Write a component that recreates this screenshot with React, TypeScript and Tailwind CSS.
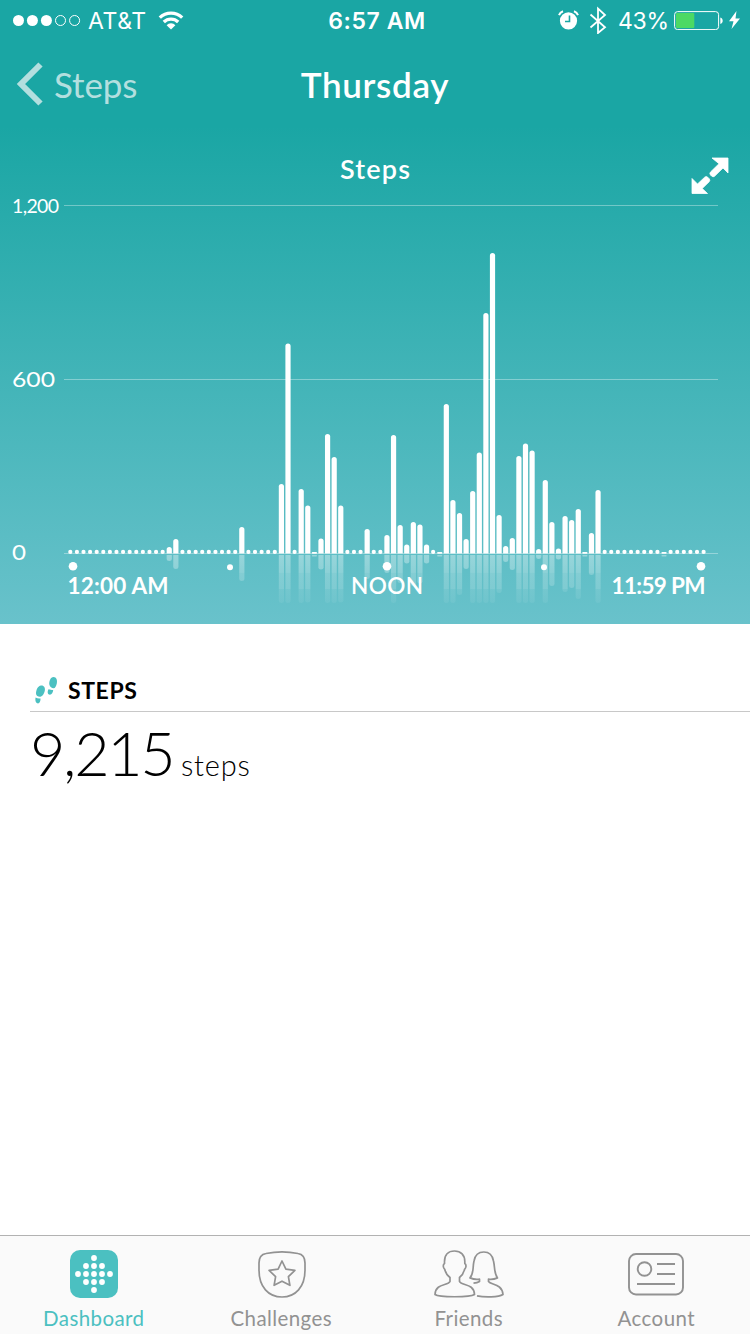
import type { ReactNode } from 'react'

// [slot, y of the bar top] - 97 slots over the day, one every 15 minutes
const BARS: [number, number][] = [
  [15, 547], [16, 539], [26, 527], [32, 484], [33, 343.5], [35, 489], [36, 505.5], [38, 538.5],
  [39, 434], [40, 457], [41, 505.5], [45, 529], [48, 535], [49, 435], [50, 525], [51, 544.5],
  [52, 522], [53, 524.5], [54, 544.5], [57, 404], [58, 500], [59, 513], [60, 539], [61, 491],
  [62, 452.5], [63, 313], [64, 253], [65, 515], [66, 546], [67, 538], [68, 456], [69, 443.5],
  [70, 450.5], [71, 549], [72, 480], [73, 522], [74, 548.5], [75, 516], [76, 520], [77, 509],
  [79, 533], [80, 490],
]
const TINY = [37, 56, 78, 90]
const SLOTS = Array.from({ length: 97 }, (_, i) => i)
const BASE = 553
const slotX = (i: number) => 70.3 + i * 6.597

const GRID = [205.5, 379.5, 553.5]

function StatusBar() {
  return (
    <div className="flex h-10 items-center font-['Inter',sans-serif] text-white">
      <div className="flex w-[250px] items-center pl-3">
        <svg width="70" height="14" viewBox="0 0 70 14" fill="none">
          <circle cx="6.5" cy="7.5" r="5.5" fill="#fff" />
          <circle cx="20.4" cy="7.5" r="5.5" fill="#fff" />
          <circle cx="34.4" cy="7.5" r="5.5" fill="#fff" />
          <circle cx="48.5" cy="7.5" r="5" stroke="#fff" />
          <circle cx="62.6" cy="7.5" r="5" stroke="#fff" />
        </svg>
        <span className="ml-[6px] w-[60px] whitespace-nowrap pt-[2px] text-[23px] leading-10 tracking-[0.6px]">AT&amp;T</span>
        <svg className="ml-[10px]" width="26" height="19" viewBox="0 0 26 19" fill="none" stroke="#fff" strokeWidth="3.3">
          <path d="M1.8 6.6a16 16 0 0 1 22.4 0" />
          <path d="M5.8 11a10.3 10.3 0 0 1 14.4 0" />
          <path d="M13 18.6 8.600 14.200a6 6 0 0 1 8.800 0z" fill="#fff" stroke="none" />
        </svg>
      </div>
      <div className="w-[254px] pt-[2px] text-center text-[23px] leading-10 font-semibold tracking-[0.6px]">6:57 AM</div>
      <div className="flex flex-1 items-center pl-[54px]">
        <svg width="21" height="20" viewBox="0 0 21 20" fill="none">
          <circle cx="10.5" cy="10.8" r="8.6" fill="#fff" />
          <path d="M1 5.2A7 7 0 0 1 5 1.2M20 5.2a7 7 0 0 0-4-4" stroke="#fff" strokeWidth="2" />
          <path d="M11.5 5.5v6h-4.5" stroke="#1aa6a4" strokeWidth="1.6" />
        </svg>
        <svg className="ml-[10px]" width="18" height="28" viewBox="0 0 18 28" fill="none" stroke="#fff" strokeWidth="1.8">
          <path d="M1.5 8.5 16 21.2 9 27V2.500l7 6.500L1.5 21.5" />
        </svg>
        <span className="ml-[11px] w-[50px] whitespace-nowrap pt-[2px] text-[23px] leading-10 tracking-[-0.3px]">43%</span>
        <svg className="ml-[6px]" width="68" height="20" viewBox="0 0 68 20" fill="none">
          <rect x="0.6" y="1.6" width="44" height="18" rx="3" stroke="#fff" />
          <rect x="2" y="3.1" width="18.3" height="15" rx="1" fill="#4cd964" />
          <path d="M46.3 7.500v6.5c3.2-.5 3.2-6 0-6.500z" fill="#fff" />
          <path d="M62.500 1 55 11.300h4.500L57.500 19 66 8.500h-4.500z" fill="#fff" />
        </svg>
      </div>
    </div>
  )
}

function NavBar() {
  return (
    <div className="flex h-[88px] items-center text-white">
      <div className="flex w-[250px] items-center pl-4 text-[#b3dfdf]">
        <svg width="28" height="44" viewBox="0 0 28 44" fill="none" stroke="currentColor" strokeWidth="6">
          <path d="M24.500 2.500 5 22l19.500 19.500" />
        </svg>
        <span className="ml-[10px] text-[35px] leading-[38px] tracking-[-0.1px]">Steps</span>
      </div>
      <div className="w-[250px] text-center text-[35px] leading-none font-semibold tracking-[0.7px]">Thursday</div>
    </div>
  )
}

function StepsChart() {
  return (
    <svg className="block" width="750" height="496" viewBox="0 128 750 496" fill="#fff">
      <defs>
        <linearGradient id="mirror" gradientUnits="userSpaceOnUse" x1="0" x2="0" y1="555" y2="603">
          <stop offset="0" stopColor="#fff" stopOpacity="0.36" />
          <stop offset="0.38" stopColor="#fff" stopOpacity="0.27" />
          <stop offset="0.38" stopColor="#fff" stopOpacity="0.22" />
          <stop offset="0.7" stopColor="#fff" stopOpacity="0.18" />
          <stop offset="0.7" stopColor="#fff" stopOpacity="0.11" />
          <stop offset="1" stopColor="#fff" stopOpacity="0.06" />
        </linearGradient>
      </defs>

      {GRID.map((y) => (
        <path key={y} d={`M64 ${y}H718`} stroke="#fff" strokeOpacity="0.35" />
      ))}

      {SLOTS.map((i) => {
        const x = slotX(i)
        const bar = BARS.find(([slot]) => slot === i)
        if (bar) {
          const top = bar[1]
          const end = Math.min(603, 555 + BASE - top)
          return (
            <g key={i}>
              <path d={`M${x - 2.6} ${BASE + 0.5}V${top + 2.6}a2.6 2.6 0 0 1 5.2 0V${BASE + 0.5}z`} />
              <path d={`M${x - 2.6} 555V${end - 2}q0 2 2.6 2t2.6 -2V555z`} fill="url(#mirror)" />
            </g>
          )
        }
        if (TINY.includes(i)) {
          return (
            <g key={i}>
              <rect x={x - 2.6} y="552" width="5.2" height="1.7" rx="0.8" />
              <rect x={x - 2.6} y="555" width="5.2" height="1.6" rx="0.8" fill="url(#mirror)" />
            </g>
          )
        }
        return <circle key={i} cx={x} cy="551.9" r="2.1" />
      })}

      <circle cx="73" cy="566.300" r="4.300" />
      <circle cx="230" cy="567.300" r="3" />
      <circle cx="387" cy="566.300" r="4.300" />
      <circle cx="544" cy="567.300" r="3" />
      <circle cx="701" cy="566.300" r="4.300" />

      <g fontFamily="Lato, sans-serif">
        <text x="340" y="178.500" fontSize="27" fontWeight="600" textLength="70">Steps</text>
        <text x="12" y="213" fontSize="19.500" textLength="47">1,200</text>
        <text x="12" y="387" fontSize="22" textLength="43" lengthAdjust="spacingAndGlyphs">600</text>
        <text x="12" y="560" fontSize="22" textLength="14" lengthAdjust="spacingAndGlyphs">0</text>
        <g fontSize="22.500" fontWeight="700">
          <text x="67.500" y="594" textLength="101">12:00 AM</text>
          <text x="351" y="594" textLength="72" fontWeight="600">NOON</text>
          <text x="611.500" y="594" textLength="94">11:59 PM</text>
        </g>
      </g>

      {/* expand */}
      <path d="M712 158h16v15l-5-5-8.500 8.300q-1.500 1.200-3-.3l-1-1q-1.300-1.500 0-3l8.500-8.300z" strokeWidth="0.8" stroke="#fff" />
      <path d="M692 178.500v15h15.500l-5.300-5 7-6.800q1.300-1.500 0-3l-1.500-1.500q-1.500-1.300-3 0l-7.200 6.800z" strokeWidth="0.8" stroke="#fff" />
    </svg>
  )
}

function Summary() {
  return (
    <div className="flex-1 bg-white pt-[52px] pl-[30px] text-black">
      <div className="flex h-9 items-start border-b border-[#c8c8c8]">
        <svg className="ml-[5px]" width="23" height="28" viewBox="0 0 23 28" fill="#4bc0c1">
          <path d="M18.500 1c3 0 4 3 3.300 6.500-.5 2.500-1.600 4.800-3.300 4.800s-3.600-1.500-4.100-3.500C13.800 5.500 15.500 1 18.500 1z" />
          <path d="M13.500 13.200c2 .2 3.300 1 4.700.8-.2 2.500-1.400 4.700-3.300 4.700-2.200 0-2.900-2.800-1.400-5.500z" />
          <path d="M6 9.500c3-.3 4.500 2.300 3.800 5.300-.6 2.600-2.300 5.800-4.500 6C3.500 21 1 19.800 1 17.500c0-3.300 1.800-7.700 5-8z" />
          <path d="M.6 21.600c1.700.9 3 1.100 4.900.8.200 2.400-.7 5.100-2.500 5.100-2.300 0-3.100-3-2.400-5.900z" />
        </svg>
        <h2 className="ml-[10px] text-[23px] leading-[28px] font-bold tracking-[0.6px]">STEPS</h2>
      </div>
      <div className="mt-[9px] flex items-baseline font-light">
        <span className="w-[151px] text-[61px] leading-[64px] tracking-[-2.3px]">9,215</span>
        <span className="text-[29px] tracking-[0.8px]">steps</span>
      </div>
    </div>
  )
}

function Tab({ label, active, children }: { label: string; active?: boolean; children: ReactNode }) {
  return (
    <div className={`flex w-[187.5px] flex-col items-center pt-3 ${active ? 'text-[#4bc0c1]' : 'text-[#929292]'}`}>
      {children}
      <span className="mt-[6px] text-[20.500px] leading-6 tracking-[0.4px]">{label}</span>
    </div>
  )
}

const DOTS = [[24, 8], [16, 16], [24, 16], [32, 16], [8, 24], [16, 24], [24, 24], [32, 24], [40, 24], [16, 32], [24, 32], [32, 32], [24, 40]]

function TabBar() {
  return (
    <div className="flex h-[99px] border-t border-[#b2b2b2] bg-[#fafafa]">
      <Tab label="Dashboard" active>
        <svg width="48" height="52" viewBox="0 -2 48 52">
          <rect width="48" height="48" rx="10" fill="currentColor" />
          {DOTS.map(([x, y]) => (
            <circle key={`${x}-${y}`} cx={x} cy={y} r="2.900" fill="#fff" />
          ))}
        </svg>
      </Tab>
      <Tab label="Challenges">
        <svg className="ml-px" width="48" height="52" viewBox="0 -2 48 52" fill="none" stroke="currentColor" strokeWidth="1.700">
          <path d="M1 13C1 7.500 3.500 4.200 8 3.500Q24 .3 40 3.500C44.500 4.200 47 7.500 47 13V20C47 37 37.500 47 24 47S1 37 1 20z" />
          <path d="m24 11 3.900 8.100 9 1.300-6.500 6.300 1.500 8.600-7.900-4.100-7.900 4.100 1.500-8.600-6.500-6.300 9-1.300z" strokeLinejoin="round" />
        </svg>
      </Tab>
      <Tab label="Friends">
        <svg width="70" height="52" viewBox="0 -2 70 52" fill="none" stroke="currentColor" strokeWidth="1.700" strokeLinejoin="round">
          <path d="M20.500 1C14 1 10.500 5 10.500 11.500v2c-1.800 1-1.500 4.500.3 6 .8 3.500 2.500 6 5.200 8v4C14 36 1.500 33 1 44.500c4 3 35 3 39.500 0C40 33 27.500 36 25.500 31.500v-4c2.500-2 4.200-4.500 5-8 1.800-1.500 2.100-5 .3-6v-2C30.800 5 27 1 20.500 1z" />
          <path d="M39.500 33.200c3-.3 4.500-.8 6-1.700v-2.300c-3.500.5-6.500 0-9.500-1.300 4-4.500 2.500-10.500 4-16.900C41 5.200 44 2 49.800 2s8.700 3.200 9.700 9c1.500 6.400.5 12.400 4 16.900-3 1.300-6 1.800-9 1.300v2.300c2.500 3.500 13.500 2 14.500 13-4.500 2.800-18.500 3-26 1.300" />
        </svg>
      </Tab>
      <Tab label="Account">
        <svg width="56" height="52" viewBox="0 -2 56 52" fill="none" stroke="currentColor" strokeWidth="1.900">
          <rect x="1" y="4" width="54" height="40.500" rx="7" />
          <circle cx="16.500" cy="19" r="6.800" />
          <path d="M29 14h18M29 24h18M9 34h38" />
        </svg>
      </Tab>
    </div>
  )
}

export default function App() {
  return (
    <div className="flex h-[1334px] w-[750px] flex-col overflow-hidden bg-white font-['Lato',sans-serif]">
      <header className="h-[624px] bg-[linear-gradient(to_bottom,#1aa6a4_0px,#1aa6a4_126px,#69c2cb_624px)]">
        <StatusBar />
        <NavBar />
        <StepsChart />
      </header>
      <Summary />
      <TabBar />
    </div>
  )
}
